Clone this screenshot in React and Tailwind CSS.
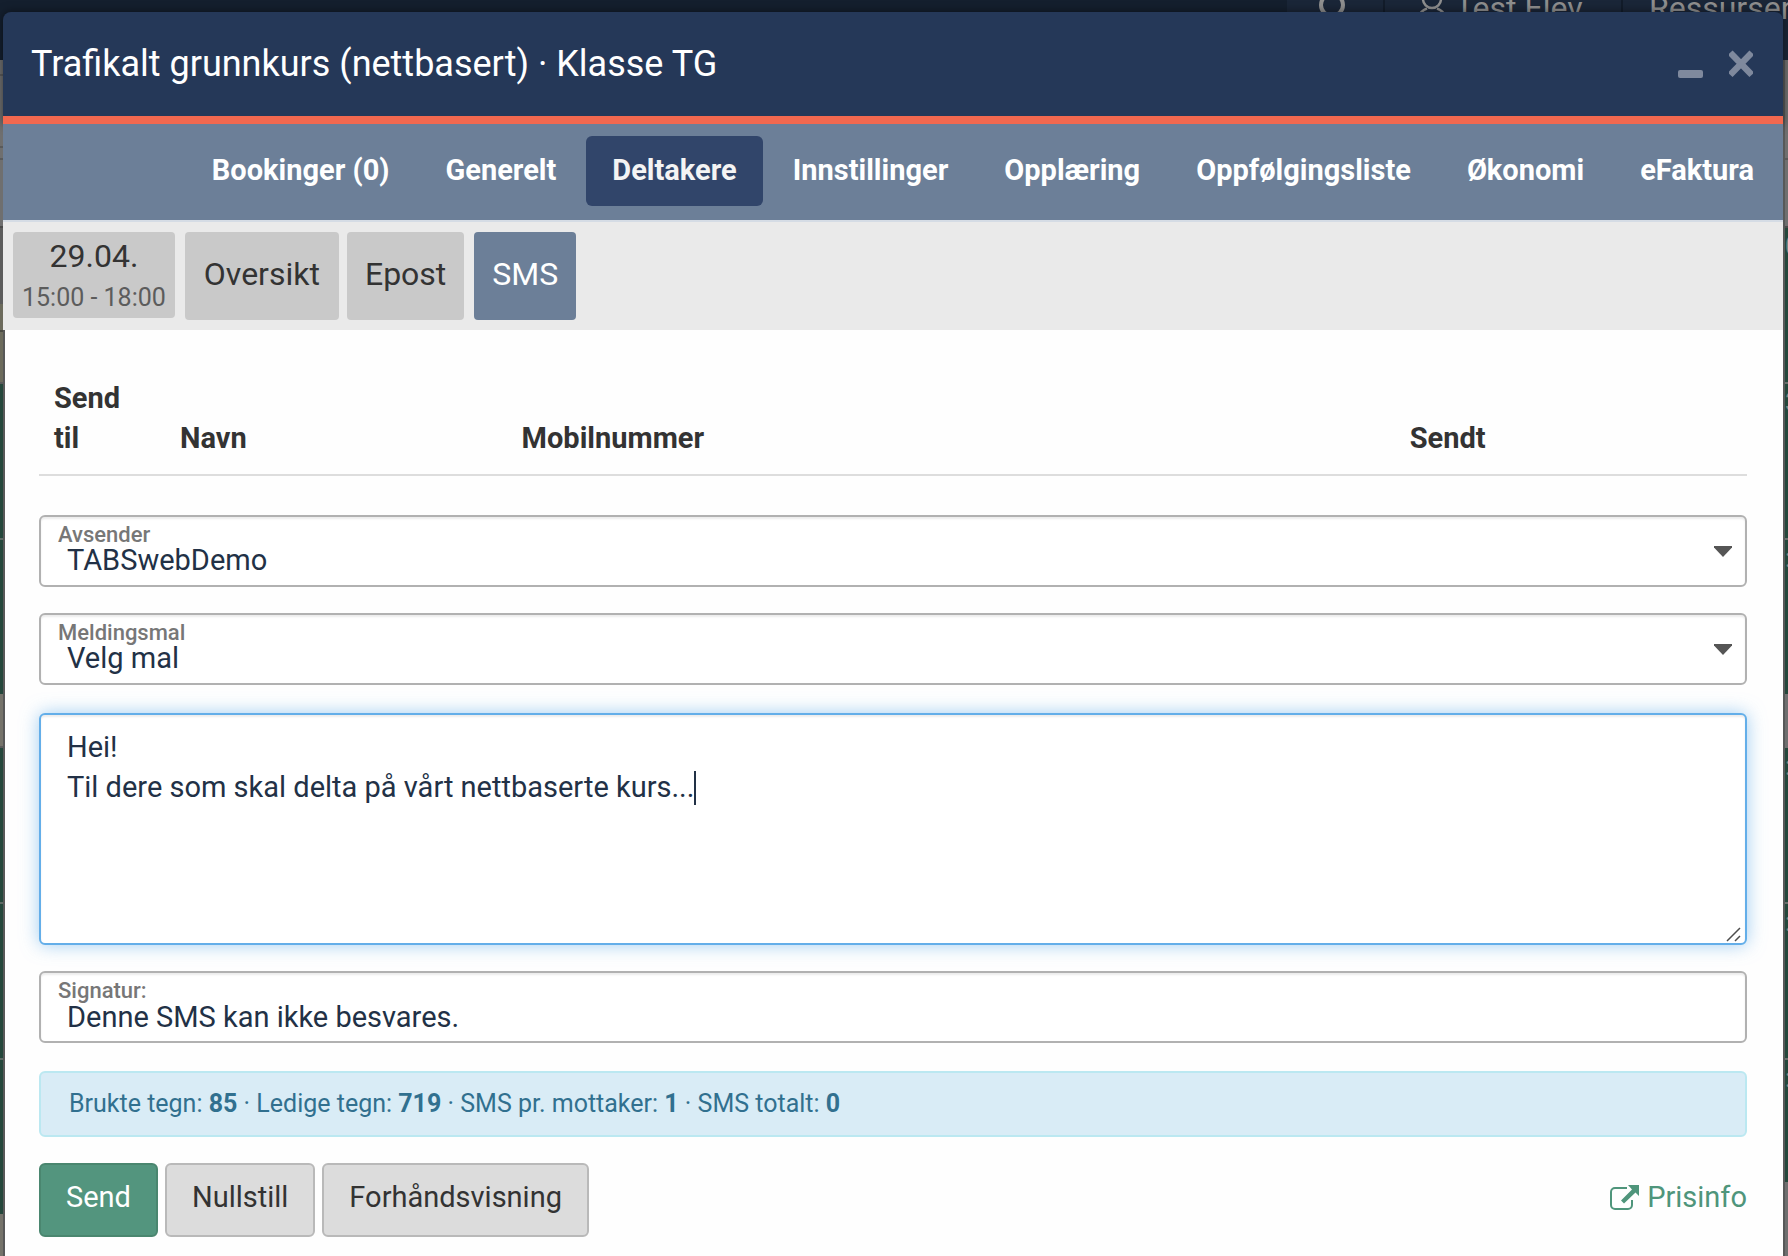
import { useState } from 'react';

const tabs = [
  'Bookinger (0)',
  'Generelt',
  'Deltakere',
  'Innstillinger',
  'Opplæring',
  'Oppfølgingsliste',
  'Økonomi',
  'eFaktura',
];

const fieldClass =
  'block w-full h-[72px] appearance-none rounded-md border-2 border-[#b1b1b1] bg-white pl-[26px] pr-16 pt-[22px] pb-0.5 text-[29px] text-[#223146] shadow-[inset_0_2px_2px_rgba(0,0,0,0.08)] focus:outline-none';

const labelClass =
  'absolute left-[19px] top-1.5 text-[22px] leading-7 font-medium text-[#777777]';

const defaultButton =
  'h-[74px] rounded-md border-2 border-[#b9b9b9] bg-[#dcdcdc] px-[25px] pb-1 text-[29px] text-[#333333]';

const SelectField = ({ id, label, options }) => (
  <div className="relative">
    <label htmlFor={id} className={labelClass}>
      {label}
    </label>
    <select id={id} className={fieldClass}>
      {options.map((option) => (
        <option key={option}>{option}</option>
      ))}
    </select>
    <svg
      className="pointer-events-none absolute right-[15px] top-[31px]"
      width="18"
      height="11"
      viewBox="0 0 18 11"
    >
      <path d="M0 0h18v1.5L9 11 0 1.5z" fill="#555555" />
    </svg>
  </div>
);

// The dimmed calendar page that lies behind the dialog
const Backdrop = () => (
  <div
    aria-hidden="true"
    className="col-start-1 row-start-1 flex flex-col overflow-hidden bg-[#6f6f6f]"
  >
    <div className="flex h-[60px] justify-end bg-[#141f2e] text-[32px] leading-9 text-[#8f8f8f]">
      <div className="flex w-[98px] items-start justify-center overflow-hidden border-r-2 border-[#121c2a] bg-[#1a2638] pr-1">
        <svg className="-mt-3" width="32" height="36" viewBox="0 0 32 36">
          <circle cx="15" cy="17" r="11" fill="none" stroke="currentColor" strokeWidth="4" />
        </svg>
      </div>
      <div className="flex w-[238px] items-start gap-2 overflow-hidden border-r-2 border-[#121c2a] bg-[#1a2638] pl-8">
        <svg className="-mt-2.5 shrink-0" width="30" height="36" viewBox="0 0 30 36">
          <path
            d="M2 27c1-5 4-7 8-8.500M20 18.500c4 1.500 7 3.500 8 8.500"
            fill="none"
            stroke="currentColor"
            strokeWidth="2.500"
          />
          <circle cx="15" cy="9" r="9" fill="none" stroke="currentColor" strokeWidth="2.500" />
        </svg>
        <span className="-mt-2.5 whitespace-nowrap">Test Elev</span>
      </div>
      <div className="w-[165px] overflow-hidden bg-[#1a2638] pl-[26px]">
        <p className="-mt-2.5 whitespace-nowrap">Ressurser</p>
      </div>
    </div>
    <div className="flex flex-1 justify-between">
      <div className="flex w-[5px] flex-col border-r-2 border-black/20">
        <div className="h-4 border-b-2 border-[#5a5a5a]" />
        <div className="h-[72px] border-b-2 border-[#5a5a5a]" />
        <div className="h-3 border-b-2 border-[#5a5a5a]" />
        <div className="h-[68px] border-b-2 border-[#4a4a4a]" />
        <div className="h-[76px] bg-[#5c5c5c]" />
        <div className="h-7 border-b-2 border-[#4a4a42] bg-[#6c6b5c]" />
        <div className="h-[52px] border-b-2 border-[#5a5a5a] bg-[#6c6b5c]" />
        <div className="h-[156px] border-b-2 border-[#5f6b65] bg-[#25473b]" />
        <div className="h-[154px] bg-[#25473b]" />
        <div className="h-[54px] border-b-2 border-[#5a5a5a] bg-[#75736a]" />
        <div className="h-[156px] border-b-2 border-[#5f6b65] bg-[#25473b]" />
        <div className="h-[156px] border-b-2 border-[#5f6b65] bg-[#25473b]" />
        <div className="h-[154px] bg-[#25473b]" />
        <div className="flex-1 bg-[#75736a]" />
      </div>
      <div className="flex w-[5px] flex-col border-l-2 border-black/20 text-[26px] leading-7 text-[#7b8a83]">
        <div className="h-[100px] border-b-2 border-[#5a5a5a]" />
        <div className="h-[68px] border-b-2 border-[#4a4a4a]" />
        <div className="h-[156px] overflow-hidden border-b-2 border-[#6a6f6c] bg-[#25473b] pt-1">0</div>
        <div className="h-[156px] overflow-hidden border-b-2 border-[#6a6f6c] bg-[#25473b] pt-1">3</div>
        <div className="h-[154px] overflow-hidden bg-[#25473b] pt-1">:</div>
        <div className="h-[54px]" />
        <div className="h-[156px] overflow-hidden border-b-2 border-[#6a6f6c] bg-[#25473b] pt-1">:</div>
        <div className="h-[156px] overflow-hidden border-b-2 border-[#6a6f6c] bg-[#25473b] pt-1">:</div>
        <div className="h-[122px] overflow-hidden bg-[#25473b] pt-1">:</div>
        <div className="flex-1" />
      </div>
    </div>
  </div>
);

const App = () => {
  const [activeTab, setActiveTab] = useState('Deltakere');
  const [message, setMessage] = useState(
    'Hei!\nTil dere som skal delta på vårt nettbaserte kurs...'
  );
  const [signature, setSignature] = useState('Denne SMS kan ikke besvares.');

  return (
    <div className="grid min-h-screen grid-cols-1 font-['Roboto',sans-serif] text-[#333333]">
      <Backdrop />

      <div
        role="dialog"
        aria-labelledby="dialog-title"
        className="z-10 col-start-1 row-start-1 mt-3 ml-[3px] mr-[5px] flex flex-col"
      >
        <header className="flex h-28 items-center justify-between rounded-t-lg border-b-8 border-[#f2684f] bg-[#253858] pl-7 pr-[30px] text-white shadow-[0_0_10px_rgba(0,0,0,0.5)]">
          <h1 id="dialog-title" className="text-[36px] leading-[50px]">
            Trafikalt grunnkurs (nettbasert) · Klasse TG
          </h1>
          <div className="flex gap-[26px] text-[#7f899d]">
            <button type="button" aria-label="Minimer">
              <svg width="25" height="28" viewBox="0 0 25 28">
                <rect x="0" y="20" width="25" height="8" rx="2" fill="currentColor" />
              </svg>
            </button>
            <button type="button" aria-label="Lukk">
              <svg width="24" height="28" viewBox="0 0 24 28">
                <path
                  d="M3.500 5l17 17.500M20.500 5L3.500 22.500"
                  stroke="currentColor"
                  strokeWidth="6.500"
                  strokeLinecap="square"
                />
              </svg>
            </button>
          </div>
        </header>

        <nav className="flex h-[98px] justify-end gap-1 border-b-2 border-[#d5dce5] bg-[#6c7f98] pr-[3px] pt-3">
          {tabs.map((tab) => (
            <button
              key={tab}
              type="button"
              onClick={() => setActiveTab(tab)}
              className={`h-[70px] whitespace-nowrap rounded-md px-[26px] text-[29px] font-bold ${
                activeTab === tab ? 'bg-[#31456a] text-[#f4f4f4]' : 'text-white'
              }`}
            >
              {tab}
            </button>
          ))}
        </nav>

        <div className="flex h-[108px] items-start gap-2 bg-[#eaeaea] pl-2.5 pt-2.5 text-[32px]">
          <button
            type="button"
            className="mr-0.5 flex h-[86px] flex-col items-center gap-0.5 rounded bg-[#c9c9c9] px-[9px] pt-1"
          >
            <span className="leading-10">29.04.</span>
            <span className="text-[25px] leading-10 text-[#5c5c5c]">15:00 - 18:00</span>
          </button>
          <button type="button" className="h-[88px] rounded bg-[#c9c9c9] px-[19px] pb-1">
            Oversikt
          </button>
          <button type="button" className="mr-0.5 h-[88px] rounded bg-[#c9c9c9] px-[18px] pb-1">
            Epost
          </button>
          <button type="button" className="h-[88px] rounded bg-[#6c7f98] px-[18px] pb-1 text-white">
            SMS
          </button>
        </div>

        <main className="ml-0.5 flex flex-1 flex-col bg-[#fefefe] pb-[18px] pl-[34px] pr-9 pt-8">
          <table className="w-full table-fixed border-b-2 border-[#dddddd] text-left text-[29px] leading-10">
            <thead>
              <tr className="align-bottom">
                <th className="w-[126px] py-4 pl-[15px] pr-9">Send til</th>
                <th className="w-[20%] px-[15px] py-4">Navn</th>
                <th className="w-[52%] px-[15px] py-4">Mobilnummer</th>
                <th className="px-[15px] py-4">Sendt</th>
              </tr>
            </thead>
          </table>

          <form className="mt-[39px]" onSubmit={(e) => e.preventDefault()}>
            <div className="flex flex-col gap-[26px]">
              <SelectField id="sender" label="Avsender" options={['TABSwebDemo']} />
              <SelectField id="template" label="Meldingsmal" options={['Velg mal']} />
            </div>

            <div className="relative mt-7 mb-[26px]">
              <textarea
                aria-label="Melding"
                value={message}
                onChange={(e) => setMessage(e.target.value)}
                className="block h-[232px] w-full resize-none rounded-md border-2 border-[#63aee9] bg-white px-[26px] py-3 text-[29px] leading-10 text-[#223146] caret-transparent shadow-[inset_0_2px_2px_rgba(0,0,0,0.08),0_0_18px_rgba(99,174,233,0.6)] focus:outline-none"
              />
              <span className="absolute left-[655px] top-[58px] h-[34px] w-0.5 bg-[#223146]" />
              <svg
                className="pointer-events-none absolute bottom-[3px] right-1.5"
                width="15"
                height="15"
                viewBox="0 0 15 15"
              >
                <path d="M1 14L14 1M9 14l5-5" stroke="#4d4d4d" strokeWidth="1.500" />
              </svg>
            </div>

            <div className="relative">
              <label htmlFor="signature" className={labelClass}>
                Signatur:
              </label>
              <input
                id="signature"
                type="text"
                value={signature}
                onChange={(e) => setSignature(e.target.value)}
                className={fieldClass}
              />
            </div>

            <p className="mt-7 mb-[26px] h-[66px] rounded-md border-2 border-[#bbe8f1] bg-[#d9ecf6] px-7 text-[25px] leading-[62px] text-[#31708f]">
              Brukte tegn: <b>85</b> · Ledige tegn: <b>719</b> · SMS pr. mottaker: <b>1</b> · SMS
              totalt: <b>0</b>
            </p>

            <div className="flex items-center justify-between">
              <div className="flex gap-[7px]">
                <button
                  type="submit"
                  className="h-[74px] rounded-md border-2 border-[#4a866f] bg-[#53957e] px-[25px] pb-1 text-[29px] text-white"
                >
                  Send
                </button>
                <button type="reset" className={defaultButton}>
                  Nullstill
                </button>
                <button type="button" className={defaultButton}>
                  Forhåndsvisning
                </button>
              </div>
              <a href="#prisinfo" className="flex items-center gap-2 pb-1 text-[29px] text-[#4f957b]">
                <svg width="29" height="26" viewBox="0 0 29 26">
                  <path
                    d="M17 3H5a4 4 0 0 0-4 4v13a4 4 0 0 0 4 4h13a4 4 0 0 0 4-4v-5"
                    fill="none"
                    stroke="currentColor"
                    strokeWidth="2"
                  />
                  <path d="M18 0h11v11l-3.500-3.500L14 18.500 11 15.500 22 4.500z" fill="currentColor" />
                </svg>
                Prisinfo
              </a>
            </div>
          </form>
        </main>
      </div>
    </div>
  );
};

export default App;
